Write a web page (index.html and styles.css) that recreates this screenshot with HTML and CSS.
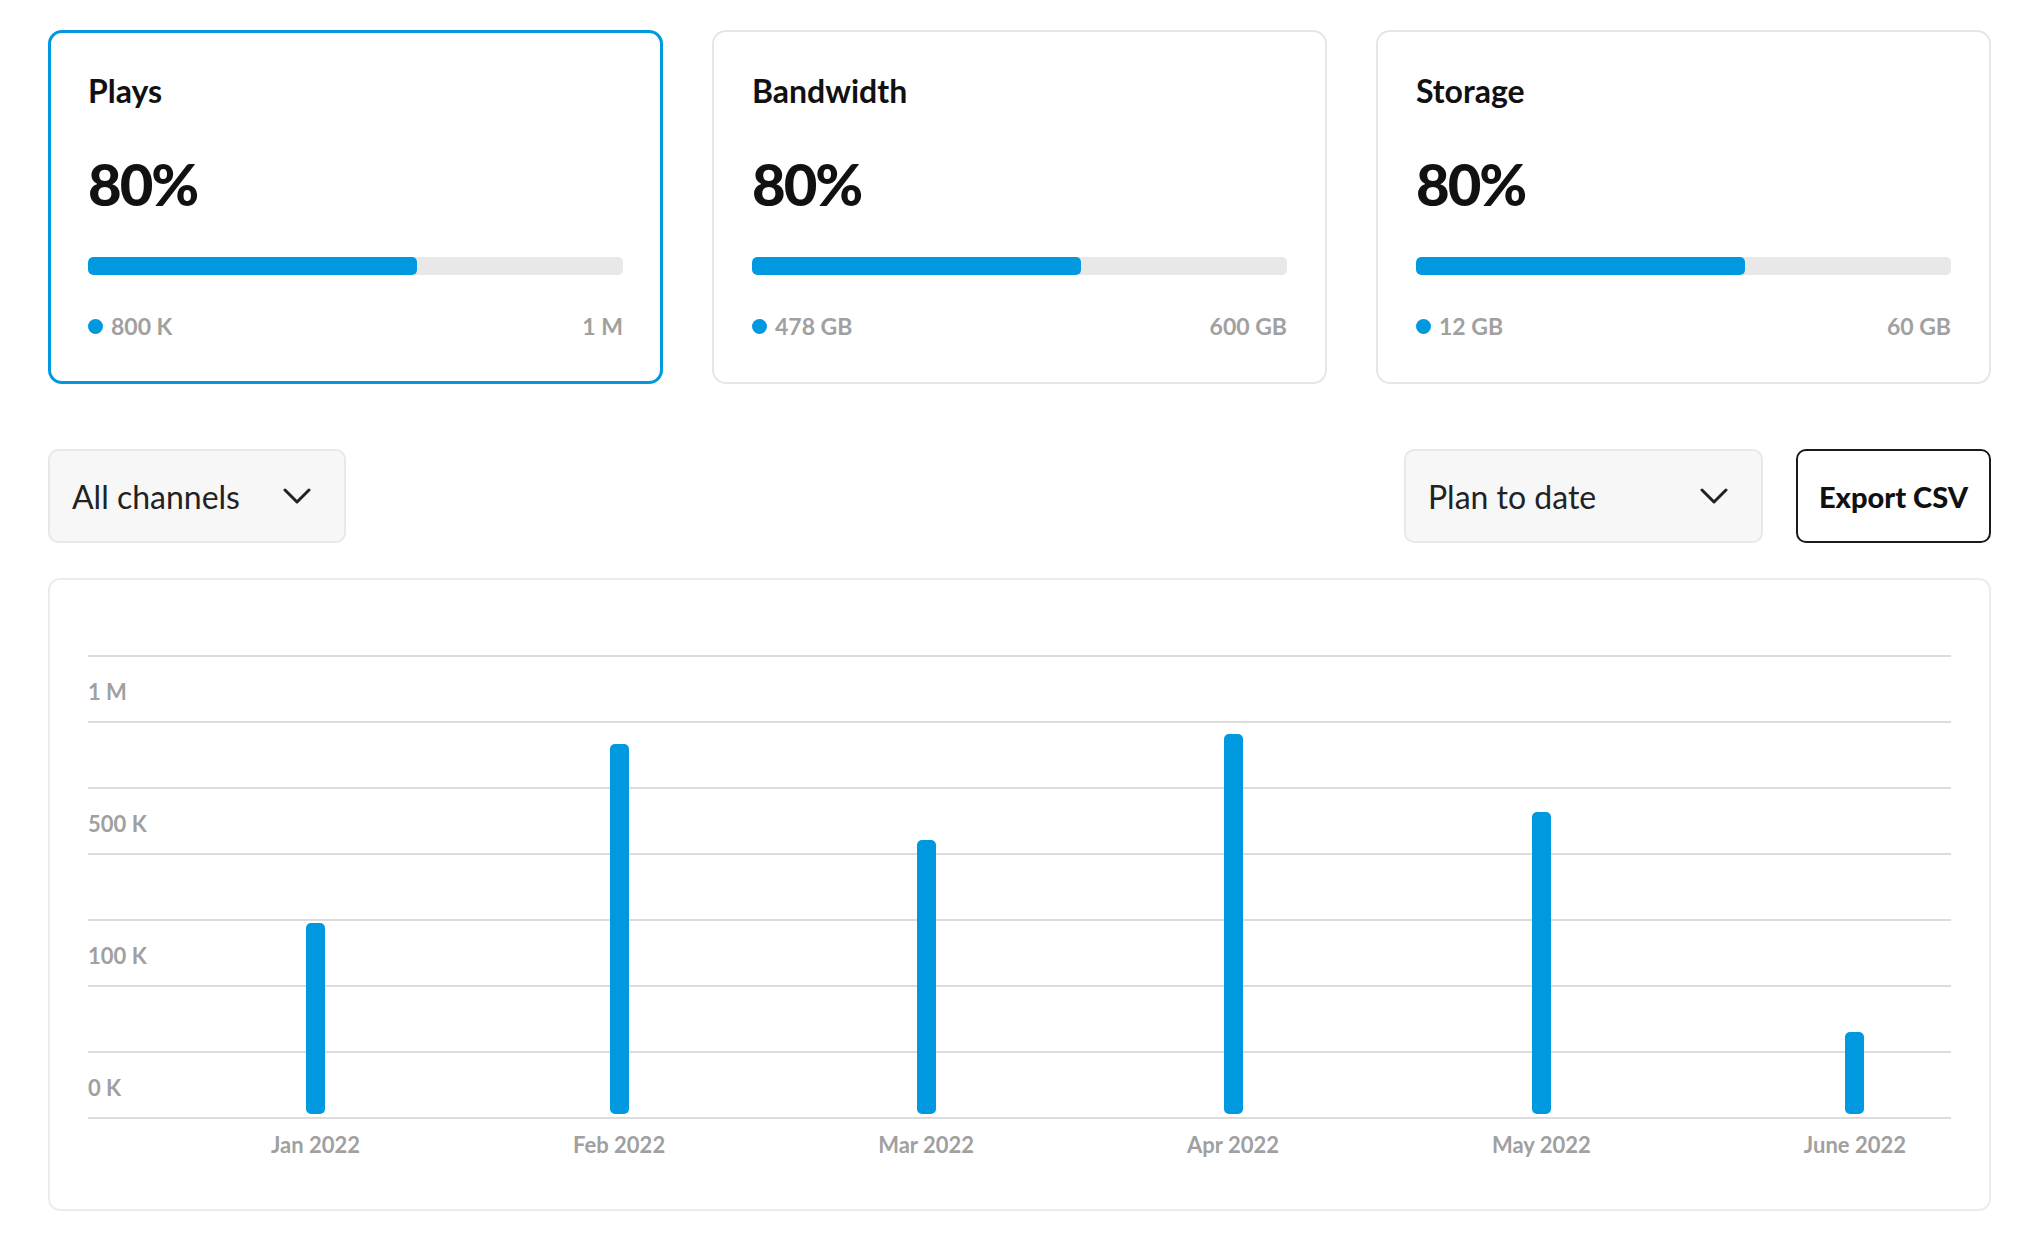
FILE: index.html
```
<!DOCTYPE html>
<html lang="en">

<head>
    <meta charset="UTF-8">
    <meta name="viewport" content="width=device-width, initial-scale=1.0">
    <title>Usage</title>
    <link rel="stylesheet" href="styles.css">
</head>

<body>
    <div class="usage">
        <div class="usage-card active">
            <h2 class="usage-title">Plays</h2>
            <div class="usage-value">80%</div>
            <div class="meter">
                <div class="meter-fill" style="width: 61.5%;"></div>
            </div>
            <div class="meter-legend">
                <span class="used">800 K</span>
                <span>1 M</span>
            </div>
        </div>
        <div class="usage-card">
            <h2 class="usage-title">Bandwidth</h2>
            <div class="usage-value">80%</div>
            <div class="meter">
                <div class="meter-fill" style="width: 61.5%;"></div>
            </div>
            <div class="meter-legend">
                <span class="used">478 GB</span>
                <span>600 GB</span>
            </div>
        </div>
        <div class="usage-card">
            <h2 class="usage-title">Storage</h2>
            <div class="usage-value">80%</div>
            <div class="meter">
                <div class="meter-fill" style="width: 61.5%;"></div>
            </div>
            <div class="meter-legend">
                <span class="used">12 GB</span>
                <span>60 GB</span>
            </div>
        </div>
    </div>

    <div class="toolbar">
        <div class="select select-channels">
            <span>All channels</span>
            <svg viewBox="0 0 28 16">
                <path d="M2 2l12 12L26 2" />
            </svg>
        </div>
        <div class="select select-range">
            <span>Plan to date</span>
            <svg viewBox="0 0 28 16">
                <path d="M2 2l12 12L26 2" />
            </svg>
        </div>
        <button class="export">Export CSV</button>
    </div>

    <div class="chart">
        <div class="plot">
            <div class="grid">
                <div class="band">1 M</div>
                <div class="band"></div>
                <div class="band">500 K</div>
                <div class="band"></div>
                <div class="band">100 K</div>
                <div class="band"></div>
                <div class="band">0 K</div>
            </div>
            <div class="months">
                <div class="month">
                    <div class="slot"><div class="bar" style="height: 191px;"></div></div>
                    <span class="month-label">Jan 2022</span>
                </div>
                <div class="month">
                    <div class="slot"><div class="bar" style="height: 370px;"></div></div>
                    <span class="month-label">Feb 2022</span>
                </div>
                <div class="month">
                    <div class="slot"><div class="bar" style="height: 274px;"></div></div>
                    <span class="month-label">Mar 2022</span>
                </div>
                <div class="month">
                    <div class="slot"><div class="bar" style="height: 380px;"></div></div>
                    <span class="month-label">Apr 2022</span>
                </div>
                <div class="month">
                    <div class="slot"><div class="bar" style="height: 302px;"></div></div>
                    <span class="month-label">May 2022</span>
                </div>
                <div class="month">
                    <div class="slot"><div class="bar" style="height: 82px;"></div></div>
                    <span class="month-label">June 2022</span>
                </div>
            </div>
        </div>
    </div>
</body>

</html>
```

FILE: styles.css
```
body {
    margin: 0;
    padding: 30px 27px 40px 48px;
    font-family: Lato, "Liberation Sans", sans-serif;
    color: #111;
    background-color: #fff;
}

/* usage cards */
.usage {
    display: grid;
    grid-template-columns: repeat(3, 1fr);
    gap: 49px;
}

.usage-card {
    border: 2px solid #e6e6e6;
    border-radius: 14px;
    padding: 42px 38px 43px;
}

.usage-card.active {
    border: 3px solid #0099e0;
    padding: 41px 37px 42px;
}

.usage-title {
    margin: 0;
    font-size: 32px;
    font-weight: 700;
    line-height: 34px;
}

.usage-value {
    margin-top: 47px;
    font-size: 58px;
    font-weight: 900;
    line-height: 58px;
    letter-spacing: -2px;
}

.meter {
    height: 18px;
    margin-top: 44px;
    background-color: #e8e8e8;
    border-radius: 5px;
    overflow: hidden;
}

.meter-fill {
    height: 100%;
    background-color: #0099e0;
    border-radius: 5px;
}

.meter-legend {
    display: flex;
    justify-content: space-between;
    margin-top: 38px;
    font-size: 23px;
    font-weight: 700;
    line-height: 26px;
    color: #a0a0a0;
}

.used {
    display: flex;
    align-items: center;
    gap: 8px;
}

.used::before {
    content: "";
    width: 15px;
    height: 15px;
    border-radius: 50%;
    background-color: #0099e0;
}

/* filters */
.toolbar {
    display: flex;
    height: 94px;
    margin-top: 65px;
}

.select {
    display: flex;
    align-items: center;
    justify-content: space-between;
    box-sizing: border-box;
    padding: 0 33px 0 22px;
    background-color: #f7f7f7;
    border: 2px solid #e8e8e8;
    border-radius: 10px;
    font-size: 32px;
    color: #222;
}

.select svg {
    width: 28px;
    height: 16px;
    fill: none;
    stroke: #222;
    stroke-width: 3;
    stroke-linecap: round;
    stroke-linejoin: round;
}

.select-channels {
    width: 298px;
}

.select-range {
    width: 359px;
    margin-left: auto;
}

.export {
    width: 195px;
    margin-left: 33px;
    background-color: #fff;
    border: 2px solid #1a1a1a;
    border-radius: 10px;
    font-family: inherit;
    font-size: 29px;
    font-weight: 900;
    color: #111;
    cursor: pointer;
}

/* chart */
.chart {
    margin-top: 35px;
    padding: 75px 38px 52px;
    border: 2px solid #ececec;
    border-radius: 12px;
}

.plot {
    display: grid;
}

.grid,
.months {
    grid-area: 1 / 1;
}

.grid {
    align-self: start;
    border-bottom: 2px solid #dcdcdc;
}

.band {
    display: flex;
    align-items: center;
    box-sizing: border-box;
    height: 66px;
    padding-top: 5px;
    border-top: 2px solid #dcdcdc;
    font-size: 22px;
    font-weight: 700;
    color: #a0a0a0;
}

/* each month is a bar centred over its label */
.months {
    display: flex;
    justify-content: space-between;
    padding: 0 45px 0 183px;
}

.month {
    display: flex;
    flex-direction: column;
    align-items: center;
}

.slot {
    display: flex;
    align-items: flex-end;
    box-sizing: border-box;
    height: 464px;
    padding-bottom: 5px;
}

.bar {
    width: 19px;
    background-color: #0099e0;
    border-radius: 5px;
}

.month-label {
    margin-top: 14px;
    font-size: 22px;
    font-weight: 700;
    line-height: 24px;
    color: #a0a0a0;
    white-space: nowrap;
}
```
